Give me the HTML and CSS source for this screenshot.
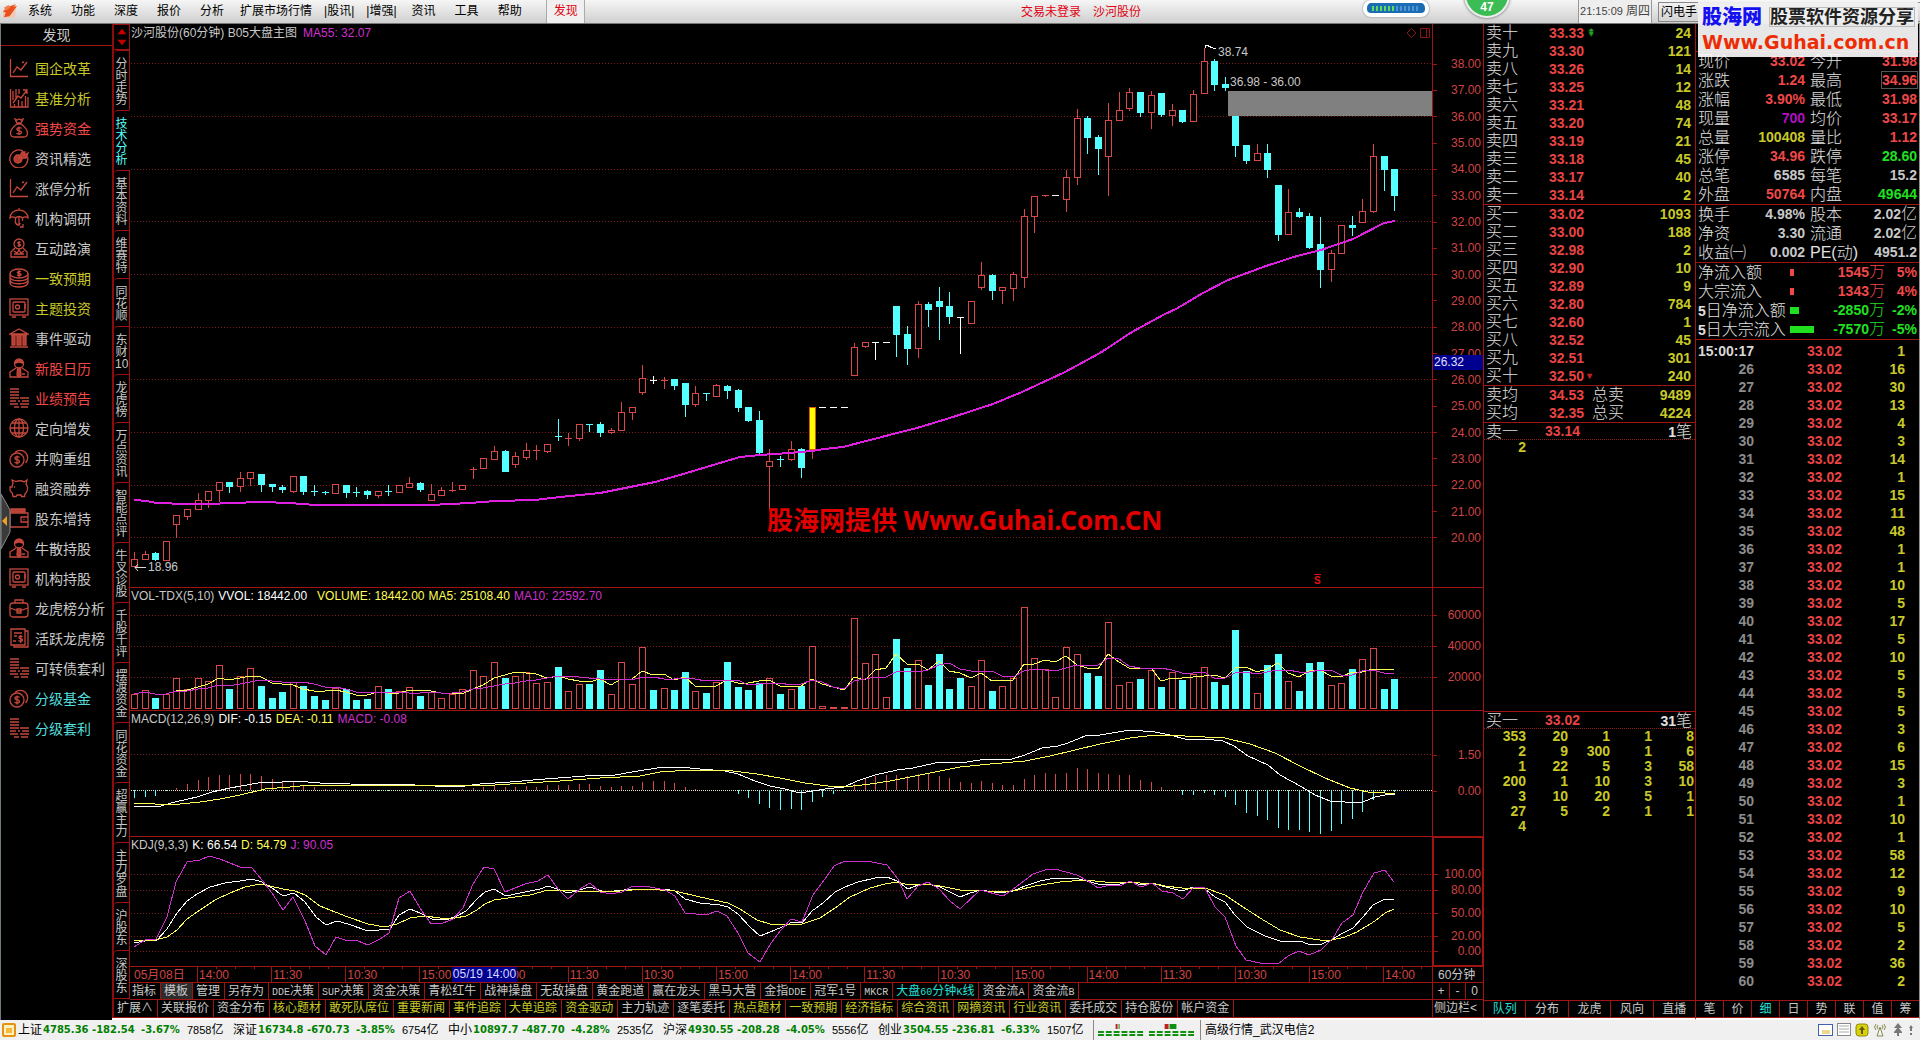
FILE: index.html
```html
<!DOCTYPE html>
<html lang="zh-CN">
<head>
<meta charset="utf-8">
<title>沙河股份 60分钟</title>
<link rel="stylesheet" href="styles.css">
</head>
<body>
<svg class="defs" width="0" height="0" aria-hidden="true">
  <defs>
    <symbol id="i-line" viewBox="0 0 20 20"><path d="M1.500 1v17.500H19M4 15l4-6 4 3 6-8M13 4.500l2-.5"/></symbol>
    <symbol id="i-bars" viewBox="0 0 20 20"><path d="M1.500 1v18H19V9M4 3v9M7 1v9M4 15l5-7 3 2 6-8M14 2h4v4M5.500 19v-3M9.500 19v-7M13 19v-6M16.500 19V8M10 1v5"/></symbol>
    <symbol id="i-bag" viewBox="0 0 20 20"><path d="M6 1l2 4h4l2-4-2 1-2-1-2 1zM8 6C4 9 1.500 12 1.500 15c0 3 2 4 4 4h9c2 0 4-1 4-4 0-3-2.500-6-6.500-9zM12.500 10.500c-1-1.500-5-1-4.500 1s5 1 4.500 3-4 2-5 .5M10 8.500v8.500"/></symbol>
    <symbol id="i-target" viewBox="0 0 20 20"><path d="M14 3A9 9 0 1 0 18.500 8.500"/><circle cx="9" cy="11" r="4" class="fill"/><path class="fill" d="M10 10l3-6 3 0-1 3 4-2-2 5z"/></symbol>
    <symbol id="i-umbrella" viewBox="0 0 20 20"><path d="M1 10a9 8 0 0 1 18 0c-2-1.500-4-1.500-5.500 0-2-2-5-2-7 0-2-1.500-4-1.500-5.500 0zM10 1v-1M10 9v8M6.500 10v3M13.500 10v3M14 16v3h-3M6 13c1 5 5 5 5 2"/></symbol>
    <symbol id="i-advisor" viewBox="0 0 20 20"><circle cx="10" cy="6" r="5"/><path d="M11.500 4.500c-1-1-3-.5-2.500.8s3 .7 2.500 2-2 1-3 .2M10 3v6M6 10l-4 4v5h16v-5l-4-4M5 13l3 2 2-3 2 3 3-2M5 16h10"/></symbol>
    <symbol id="i-coins" viewBox="0 0 20 20"><ellipse cx="10" cy="5.500" rx="9" ry="4.500"/><path d="M1 5.500v9c0 6 18 6 18 0v-9M1 9c0 5 18 5 18 0M1 12c0 5 18 5 18 0M12 4c-1-1-4-.5-3.500.7s4 .6 3.500 2-3 .8-4 0M10 2v7"/></symbol>
    <symbol id="i-safe" viewBox="0 0 20 20"><rect x="1" y="1" width="18" height="16"/><rect x="4" y="4" width="12" height="10" rx="1"/><circle cx="8.500" cy="9" r="2"/><path d="M16 6v5M3 19h4M13 19h4"/></symbol>
    <symbol id="i-bank" viewBox="0 0 20 20"><path d="M1 6l9-5 9 5zM1 19h18M2 7h16"/><path class="fill" d="M3 8h3v9H3zM8 8h4v9H8zM14 8h3v9h-3z"/></symbol>
    <symbol id="i-person" viewBox="0 0 20 20"><circle cx="10" cy="5.500" r="4.500"/><path class="fill" d="M6 5c1-4 7-4 8 0-2 0-3-1-4-1s-2 1-4 1zM8.500 11h3l.5 6-2 2-2-2z"/><path d="M7 10l-6 4v5h18v-5l-6-4M13 16h3"/></symbol>
    <symbol id="i-stack" viewBox="0 0 20 20"><path d="M1 1h9M1 4h9M1 7h9M1 10h9M1 13h6M1 16h8M11 10h9M13 13h7M9 13h2M11 16h9M5 19h5M12 19h7"/></symbol>
    <symbol id="i-globe" viewBox="0 0 20 20"><circle cx="10" cy="10" r="9"/><ellipse cx="10" cy="10" rx="4.500" ry="9"/><path d="M10 1v18M1 10h18M3 5h14M3 15h14"/></symbol>
    <symbol id="i-money" viewBox="0 0 20 20"><circle cx="8" cy="12" r="7"/><path d="M6 4.500A7 7 0 1 1 16.500 15M10.500 9.500c-1-1.500-5-1-4.500 1s5 1 4.500 3-4 2-5 .5M8 7.500v9"/></symbol>
    <symbol id="i-piggy" viewBox="0 0 20 20"><path d="M4 5l-1-3 4 1.500c3-1 6-1 8 .5l3-2-1 4c3 4 1 8-1 10l-.5 2.500h-3L12 17H8l-1 1.500H4L3.500 16C3 14 1 14 1 12V9h2zM5 9h1"/></symbol>
    <symbol id="i-wallet" viewBox="0 0 20 20"><path class="fill" d="M2 1h14v3H2z"/><path d="M1 5h18v14H1zM19 9h-7v5h7M14.500 11.500h1"/></symbol>
    <symbol id="i-case" viewBox="0 0 20 20"><rect x="1" y="5" width="18" height="14" rx="3"/><path d="M6 5V2h8v3M1 10l9 3 9-3M8 11h4v4H8z"/></symbol>
    <symbol id="i-bill" viewBox="0 0 20 20"><path d="M2 1h14v16H2zM16 3h3v16H5v-2M5 5h8M5 8h3M13.500 9c-1-1.500-4-1-3.500.7s4 .8 3.500 2.300-3 1.500-4 .5M11.800 7v8M4 13h3"/></symbol>
  </defs>
</svg>

<header class="menubar">
  <svg class="logo" viewBox="0 0 16 16" aria-hidden="true"><path d="M1 15V7l3-3 4 2 6-5 1 1-1 12z" fill="#f0c8b4"/><path d="M2 14l6-1 8-11-4 1 3-3-8 3-6 5 3 1z" fill="#e8501c"/><path d="M2 4l5-3 2 3-5 3z" fill="#f08050"/></svg>
  <nav class="menu">
    <button>系统</button><button>功能</button><button>深度</button><button>报价</button><button>分析</button><button class="wide">扩展市场行情</button><button class="piped">|股讯|</button><button class="piped">|增强|</button><button>资讯</button><button>工具</button><button>帮助</button><button class="discover">发现</button>
  </nav>
  <div class="account"><a href="#">交易未登录</a><a href="#">沙河股份</a></div>
  <div class="meter"><span class="meter-on"></span><span class="meter-off"></span></div>
  <div class="score">47</div>
  <div class="clock">21:15:09 <span>周四</span></div>
  <button class="flash">闪电手</button>
  <aside class="sitemark">
    <strong class="sitemark-name">股海网</strong><span class="sitemark-motto">股票软件资源分享</span>
    <strong class="sitemark-url">Www.Guhai.com.cn</strong>
  </aside>
</header>

<main class="workspace">
  <aside class="sidebar">
    <h2>发现</h2>
    <nav class="topics">
      <a href="#" class="yellow"><svg><use href="#i-line"/></svg>国企改革</a>
      <a href="#" class="yellow"><svg><use href="#i-bars"/></svg>基准分析</a>
      <a href="#" class="red"><svg><use href="#i-bag"/></svg>强势资金</a>
      <a href="#"><svg><use href="#i-target"/></svg>资讯精选</a>
      <a href="#"><svg><use href="#i-line"/></svg>涨停分析</a>
      <a href="#"><svg><use href="#i-umbrella"/></svg>机构调研</a>
      <a href="#"><svg><use href="#i-advisor"/></svg>互动路演</a>
      <a href="#" class="yellow"><svg><use href="#i-coins"/></svg>一致预期</a>
      <a href="#" class="yellow"><svg><use href="#i-safe"/></svg>主题投资</a>
      <a href="#"><svg><use href="#i-bank"/></svg>事件驱动</a>
      <a href="#" class="red"><svg><use href="#i-person"/></svg>新股日历</a>
      <a href="#" class="red"><svg><use href="#i-stack"/></svg>业绩预告</a>
      <a href="#"><svg><use href="#i-globe"/></svg>定向增发</a>
      <a href="#"><svg><use href="#i-money"/></svg>并购重组</a>
      <a href="#"><svg><use href="#i-piggy"/></svg>融资融券</a>
      <a href="#"><svg><use href="#i-wallet"/></svg>股东增持</a>
      <a href="#"><svg><use href="#i-person"/></svg>牛散持股</a>
      <a href="#"><svg><use href="#i-safe"/></svg>机构持股</a>
      <a href="#"><svg><use href="#i-case"/></svg>龙虎榜分析</a>
      <a href="#"><svg><use href="#i-bill"/></svg>活跃龙虎榜</a>
      <a href="#"><svg><use href="#i-stack"/></svg>可转债套利</a>
      <a href="#" class="cyan"><svg><use href="#i-money"/></svg>分级基金</a>
      <a href="#" class="cyan"><svg><use href="#i-stack"/></svg>分级套利</a>
    </nav>
    <button class="collapse" aria-label="收起"><svg viewBox="0 0 10 56"><path d="M0 0l9 16v22L0 55z" fill="#3a3a3a" stroke="#8a8a8a"/><path d="M1 27l5-5v10z" fill="#f0a020"/></svg></button>
  </aside>

  <section class="center">
    <div class="stage">
      <nav class="vtabs">
        <div class="arrows"><svg viewBox="0 0 15 26"><path d="M3 10l5-6 5 6zM3 16h10l-5 6z" fill="#c00000"/></svg></div>
        <a href="#">分时走势</a><a href="#" class="active">技术分析</a><a href="#">基本资料</a><a href="#">维赛特</a><a href="#">同花顺</a><a href="#">东财10</a><a href="#">龙虎榜</a><a href="#">万点资讯</a><a href="#">智能点评</a><a href="#">牛叉诊股</a><a href="#">千股千评</a><a href="#">摆渡资金</a><a href="#">同花资金</a><a href="#">超赢主力</a><a href="#">主力罗盘</a><a href="#">沪股东</a><a href="#">深股东</a>
      </nav>
      <div class="charts">
        <section class="panel price">
          <svg class="plot" id="price" viewBox="130 24 1302 563" preserveAspectRatio="none"></svg>
          <div class="legend"><span>沙河股份(60分钟) B05大盘主图</span><span class="magenta">MA55: 32.07</span></div>
          <svg class="corner" viewBox="0 0 24 12"><path d="M5.500 1.500l4.500 4.500-4.500 4.500L1 6zM14.500 1.500h9v9h-9zM20.500 1.500v9"/></svg>
          <span class="note high">38.74</span>
          <span class="note gap">36.98 - 36.00</span>
          <span class="note low"><svg viewBox="0 0 12 8"><path d="M12 4.500H1M4 1L1 4.500 4 8"/></svg>18.96</span>
          <span class="note sell">S</span>
          <strong class="banner">股海网提供 Www.Guhai.Com.CN</strong>
          <ol class="axis"><li>38.00</li><li>37.00</li><li>36.00</li><li>35.00</li><li>34.00</li><li>33.00</li><li>32.00</li><li>31.00</li><li>30.00</li><li>29.00</li><li>28.00</li><li>27.00</li><li>26.00</li><li>25.00</li><li>24.00</li><li>23.00</li><li>22.00</li><li>21.00</li><li>20.00</li></ol>
          <span class="cursor-price">26.32</span>
        </section>
        <section class="panel volume">
          <svg class="plot" id="volume" viewBox="130 588 1302 122" preserveAspectRatio="none"></svg>
          <div class="legend"><span>VOL-TDX(5,10)</span><span class="white">VVOL: 18442.00</span><span class="yellow-hi lead">VOLUME: 18442.00</span><span class="yellow-hi">MA5: 25108.40</span><span class="magenta">MA10: 22592.70</span></div>
          <ol class="axis"><li>60000</li><li>40000</li><li>20000</li></ol>
        </section>
        <section class="panel macd">
          <svg class="plot" id="macd" viewBox="130 711 1302 125" preserveAspectRatio="none"></svg>
          <div class="legend"><span>MACD(12,26,9)</span><span class="white">DIF: -0.15</span><span class="yellow-hi">DEA: -0.11</span><span class="magenta">MACD: -0.08</span></div>
          <ol class="axis"><li>1.50</li><li>0.00</li></ol>
        </section>
        <section class="panel kdj">
          <svg class="plot" id="kdj" viewBox="130 837 1302 129" preserveAspectRatio="none"></svg>
          <div class="legend"><span>KDJ(9,3,3)</span><span class="white">K: 66.54</span><span class="yellow-hi">D: 54.79</span><span class="magenta">J: 90.05</span></div>
          <ol class="axis"><li>100.00</li><li>80.00</li><li>50.00</li><li>20.00</li><li>0.00</li></ol>
        </section>
        <div class="timeline">
          <ol><li>05月08日</li><li>14:00</li><li>11:30</li><li>10:30</li><li>15:00</li><li>14:00</li><li>11:30</li><li>10:30</li><li>15:00</li><li>14:00</li><li>11:30</li><li>10:30</li><li>15:00</li><li>14:00</li><li>11:30</li><li>10:30</li><li>15:00</li><li>14:00</li></ol>
          <span class="cursor-time">05/19 14:00</span>
          <span class="period">60分钟</span>
        </div>
        <div class="strip templates">
          <nav><button>指标</button><button class="on">模板</button><button>管理</button><button>另存为</button><button><code>DDE</code>决策</button><button><code>SUP</code>决策</button><button>资金决策</button><button>青松红牛</button><button>战神操盘</button><button>无敌操盘</button><button>黄金跑道</button><button>赢在龙头</button><button>黑马大营</button><button>金指<code>DDE</code></button><button>冠军<code>1</code>号</button><button><code>MKCR</code></button><button class="cyan-hi">大盘<code>60</code>分钟<code>K</code>线</button><button>资金流<code>A</code></button><button>资金流<code>B</code></button></nav>
          <div class="zoomers"><button>+</button><button>-</button><button>0</button></div>
        </div>
      </div>
    </div>
    <div class="strip extras">
      <nav><button>扩展∧</button><button>关联报价</button><button>资金分布</button><button class="yellow">核心题材</button><button class="yellow">敢死队席位</button><button class="yellow">重要新闻</button><button class="yellow">事件追踪</button><button class="yellow">大单追踪</button><button class="yellow">资金驱动</button><button>主力轨迹</button><button>逐笔委托</button><button class="yellow">热点题材</button><button class="yellow">一致预期</button><button class="yellow">经济指标</button><button class="yellow">综合资讯</button><button class="yellow">网摘资讯</button><button class="yellow">行业资讯</button><button>委托成交</button><button>持仓股份</button><button>帐户资金</button></nav>
      <button class="side-toggle">侧边栏&lt;</button>
    </div>
  </section>

  <section class="depth">
    <table class="book">
      <tbody>
        <tr><th>卖十</th><td class="p">33.33</td><td class="mark up">⇞</td><td class="q">24</td></tr>
        <tr><th>卖九</th><td class="p">33.30</td><td></td><td class="q">121</td></tr>
        <tr><th>卖八</th><td class="p">33.26</td><td></td><td class="q">14</td></tr>
        <tr><th>卖七</th><td class="p">33.25</td><td></td><td class="q">12</td></tr>
        <tr><th>卖六</th><td class="p">33.21</td><td></td><td class="q">48</td></tr>
        <tr><th>卖五</th><td class="p">33.20</td><td></td><td class="q">74</td></tr>
        <tr><th>卖四</th><td class="p">33.19</td><td></td><td class="q">21</td></tr>
        <tr><th>卖三</th><td class="p">33.18</td><td></td><td class="q">45</td></tr>
        <tr><th>卖二</th><td class="p">33.17</td><td></td><td class="q">40</td></tr>
        <tr><th>卖一</th><td class="p">33.14</td><td></td><td class="q">2</td></tr>
      </tbody>
    </table>
    <table class="book">
      <tbody>
        <tr><th>买一</th><td class="p">33.02</td><td></td><td class="q">1093</td></tr>
        <tr><th>买二</th><td class="p">33.00</td><td></td><td class="q">188</td></tr>
        <tr><th>买三</th><td class="p">32.98</td><td></td><td class="q">2</td></tr>
        <tr><th>买四</th><td class="p">32.90</td><td></td><td class="q">10</td></tr>
        <tr><th>买五</th><td class="p">32.89</td><td></td><td class="q">9</td></tr>
        <tr><th>买六</th><td class="p">32.80</td><td></td><td class="q">784</td></tr>
        <tr><th>买七</th><td class="p">32.60</td><td></td><td class="q">1</td></tr>
        <tr><th>买八</th><td class="p">32.52</td><td></td><td class="q">45</td></tr>
        <tr><th>买九</th><td class="p">32.51</td><td></td><td class="q">301</td></tr>
        <tr><th>买十</th><td class="p">32.50</td><td class="mark down">▾</td><td class="q">240</td></tr>
      </tbody>
    </table>
    <table class="book averages">
      <tbody>
        <tr><th>卖均</th><td class="p">34.53</td><th>总卖</th><td class="q">9489</td></tr>
        <tr><th>买均</th><td class="p">32.35</td><th>总买</th><td class="q">4224</td></tr>
      </tbody>
    </table>
    <section class="queue">
      <h3><span>卖一</span><b class="up-price">33.14</b><span class="count"><b>1</b>笔</span></h3>
      <table><tbody><tr><td>2</td><td></td><td></td><td></td><td></td></tr></tbody></table>
    </section>
    <section class="queue">
      <h3><span>买一</span><b class="up-price">33.02</b><span class="count"><b>31</b>笔</span></h3>
      <table><tbody>
        <tr><td>353</td><td>20</td><td>1</td><td>1</td><td>8</td></tr>
        <tr><td>2</td><td>9</td><td>300</td><td>1</td><td>6</td></tr>
        <tr><td>1</td><td>22</td><td>5</td><td>3</td><td>58</td></tr>
        <tr><td>200</td><td>1</td><td>10</td><td>3</td><td>10</td></tr>
        <tr><td>3</td><td>10</td><td>20</td><td>5</td><td>1</td></tr>
        <tr><td>27</td><td>5</td><td>2</td><td>1</td><td>1</td></tr>
        <tr><td>4</td><td></td><td></td><td></td><td></td></tr>
      </tbody></table>
    </section>
    <nav class="foot-tabs"><button class="cyan-hi">队列</button><button>分布</button><button>龙虎</button><button>风向</button><button>直播</button></nav>
  </section>

  <section class="quote">
    <div class="quote-head"></div>
    <table class="stats">
      <tbody>
        <tr><th>现价</th><td class="r">33.02</td><th>今开</th><td class="r">31.98</td></tr>
        <tr><th>涨跌</th><td class="r">1.24</td><th>最高</th><td class="r"><span class="boxed">34.96</span></td></tr>
        <tr><th>涨幅</th><td class="r">3.90%</td><th>最低</th><td class="r">31.98</td></tr>
        <tr><th>现量</th><td class="m">700</td><th>均价</th><td class="r">33.17</td></tr>
        <tr><th>总量</th><td class="y">100408</td><th>量比</th><td class="r">1.12</td></tr>
        <tr><th>涨停</th><td class="r">34.96</td><th>跌停</th><td class="g">28.60</td></tr>
        <tr><th>总笔</th><td>6585</td><th>每笔</th><td>15.2</td></tr>
        <tr><th>外盘</th><td class="r">50764</td><th>内盘</th><td class="g">49644</td></tr>
      </tbody>
    </table>
    <table class="stats">
      <tbody>
        <tr><th>换手</th><td>4.98%</td><th>股本</th><td>2.02<i>亿</i></td></tr>
        <tr><th>净资</th><td>3.30</td><th>流通</th><td>2.02<i>亿</i></td></tr>
        <tr><th>收益㈠</th><td>0.002</td><th>PE(动)</th><td>4951.2</td></tr>
      </tbody>
    </table>
    <table class="flows">
      <tbody>
        <tr class="r"><th>净流入额</th><td class="bar"><span style="width:4px"></span></td><td>1545<i>万</i></td><td>5%</td></tr>
        <tr class="r"><th>大宗流入</th><td class="bar"><span style="width:4px"></span></td><td>1343<i>万</i></td><td>4%</td></tr>
        <tr class="g"><th><b>5</b>日净流入额</th><td class="bar"><span style="width:9px"></span></td><td>-2850<i>万</i></td><td>-2%</td></tr>
        <tr class="g"><th><b>5</b>日大宗流入</th><td class="bar"><span style="width:24px"></span></td><td>-7570<i>万</i></td><td>-5%</td></tr>
      </tbody>
    </table>
    <div class="ticks"><table><tbody id="ticks"></tbody></table></div>
    <nav class="foot-tabs"><button>笔</button><button>价</button><button class="cyan-hi">细</button><button>日</button><button>势</button><button>联</button><button>值</button><button>筹</button></nav>
  </section>
</main>

<footer class="statusbar">
  <svg class="status-logo" viewBox="0 0 14 14"><rect x="1" y="1" width="12" height="12" rx="1" fill="#fff0c0" stroke="#e89010" stroke-width="2"/><rect x="4" y="5" width="6" height="5" fill="#f8b840"/></svg>
  <ul class="indices">
    <li><span>上证</span><b>4785.36</b><b>-182.54</b><b>-3.67%</b><span><small>7858</small>亿</span></li>
    <li><span>深证</span><b>16734.8</b><b>-670.73</b><b>-3.85%</b><span><small>6754</small>亿</span></li>
    <li><span>中小</span><b>10897.7</b><b>-487.70</b><b>-4.28%</b><span><small>2535</small>亿</span></li>
    <li><span>沪深</span><b>4930.55</b><b>-208.28</b><b>-4.05%</b><span><small>5556</small>亿</span></li>
    <li><span>创业</span><b>3504.55</b><b>-236.81</b><b>-6.33%</b><span><small>1507</small>亿</span></li>
  </ul>
  <svg class="heat" viewBox="0 0 100 14"><path d="M0 9h46M0 12h46M52 9h48M52 12h48" stroke="#109010" stroke-width="2" stroke-dasharray="6 2"/><path d="M18 1h2v5h-2zM68 1h4v5h-4z" fill="#c02020"/><path d="M21 1h1v5h-1zM73 1h7v5h-7z" fill="#109010"/></svg>
  <span class="server">高级行情_武汉电信2</span>
  <svg class="tray" viewBox="0 0 98 16"><rect x="1.500" y="2.500" width="14" height="11" fill="#fff" stroke="#4060b0"/><path d="M5 9h8M5 11h8" stroke="#d8b020"/><rect x="20.500" y="1.500" width="13" height="12" fill="#fff" stroke="#888"/><path d="M22 4h10M22 7h10M22 10h10" stroke="#aaa"/><rect x="39" y="2" width="12" height="12" rx="3" fill="#d8d010" stroke="#908c00"/><path d="M42 8l3-4 3 4h-2v4h-2V8z" fill="#605c00"/><path d="M63 5l-3 9h6zM59 2q-3 3 0 6M67 2q3 3 0 6M61 3q-2 2 0 4M65 3q2 2 0 4" fill="none" stroke="#8a8a50"/><path d="M81 1l4 5h-8zM81 5l4 5h-8zM77 10h8v1h-3v3h-2v-3h-3zM94 3l2 3h-1v3h-2V6h-1zM93 11h2v2h-2z" fill="#777"/></svg>
</footer>
<script src="app.js"></script>
</body>
</html>
```
FILE: styles.css
```css
* { box-sizing: border-box; }
html, body { height: 100%; }
body {
  margin: 0;
  display: flex;
  flex-direction: column;
  background: #000;
  color: #c8c8c8;
  font: 12px/16px "Liberation Sans", "Noto Sans CJK SC", sans-serif;
  overflow: hidden;
}
button { margin: 0; padding: 0; border: 0; background: none; color: inherit; font: inherit; white-space: nowrap; }
a { color: inherit; text-decoration: none; }
ol, ul, h2, h3 { margin: 0; padding: 0; list-style: none; font-weight: 400; }
table { width: 100%; border-collapse: collapse; table-layout: fixed; }
th, td { padding: 0; white-space: nowrap; }
i { font-style: normal; }
b { font-weight: 700; }
.defs { position: absolute; }

.yellow { color: #c8c828; }
.yellow-hi { color: #ffff54; }
.white { color: #fff; }
.magenta { color: #d030d0; }
.cyan { color: #54dcdc; }
.cyan-hi { color: #20e0d8; }
.red { color: #f04848; }

/* menu bar */
.menubar {
  position: relative;
  flex: none;
  display: flex;
  align-items: center;
  height: 24px;
  background: linear-gradient(#f6f6f6, #cfcfcf);
  border-bottom: 1px solid #777;
  color: #000;
}
.logo { width: 15px; height: 15px; margin: 0 2px; }
.menu { display: flex; }
.menu button { padding: 0 10px 0 9px; line-height: 23px; }
.menu .wide { padding: 0 6px; }
.menu .piped { padding: 0 6px; }
.menu .discover { margin-left: 14px; padding: 0 6px 0 7px; border: solid #aaa; border-width: 0 1px; background: #f0f0f0; color: #e00010; }
.account { display: flex; gap: 12px; margin-left: auto; color: #e00010; }
.meter { display: flex; align-items: center; align-self: flex-start; width: 66px; height: 17px; margin-left: 222px; padding: 0 5px; border: 4px solid #fff; border-top-width: 3px; border-radius: 8px; background: #1c6cb4; box-shadow: 0 0 2px #777; }
.meter-on, .meter-off { height: 5px; flex: 1; background: repeating-linear-gradient(90deg, #5ce05c 0 2px, #1c6cb4 2px 4px); }
.meter-off { background: repeating-linear-gradient(90deg, #4c94d4 0 2px, #1c6cb4 2px 4px); }
.score { align-self: flex-start; width: 46px; height: 46px; margin: -28px 0 0 35px; padding-top: 25px; border: 2px solid #eee; border-radius: 50%; background: #3cbc54; box-shadow: 0 0 3px #555; color: #fff; font-size: 12px; font-weight: 700; line-height: 16px; text-align: center; z-index: 1; }
.clock { width: 74px; margin-left: 68px; border: solid #999; border-width: 0 1px; background: #eee; color: #444; font-size: 11px; line-height: 23px; text-align: center; white-space: nowrap; }
.clock span { font-size: 12px; }
.flash { flex: none; width: 268px; margin: 0 -6px 0 6px; padding-left: 2px; border: 1px solid #888; line-height: 18px; text-align: left; }
.sitemark { position: absolute; top: 2px; right: 2px; z-index: 2; display: grid; grid-template-columns: 64px 1fr; align-content: center; align-items: center; width: 220px; height: 55px; padding: 0 4px; background: linear-gradient(rgba(240, 240, 240, .96) 50%, rgba(255, 255, 255, .9)); white-space: nowrap; }
.sitemark-name { color: #1410f0; font-size: 20px; font-weight: 900; line-height: 24px; }
.sitemark-motto { margin-left: 4px; color: #222; font-size: 18px; font-weight: 700; line-height: 18px; outline: 1px solid #bbb; width: 144px; }
.sitemark-url { grid-column: 1 / 3; color: #ee2c04; font: 700 19px/26px "DejaVu Sans", sans-serif; }

/* workspace */
.workspace { flex: 1; min-height: 0; display: grid; grid-template: minmax(0, 1fr) / 112px minmax(0, 1fr) 212px 224px; }
.sidebar { position: relative; border-left: 1px solid #707880; }
.sidebar h2 { height: 22px; border-bottom: 1px solid #a01414; font-size: 14px; line-height: 22px; text-align: center; }
.topics { padding-top: 8px; font-size: 14px; line-height: 30px; }
.topics a { display: flex; align-items: center; gap: 6px; height: 30px; padding-left: 8px; }
.topics svg { width: 20px; height: 20px; margin-bottom: 2px; fill: none; stroke: #c4483c; stroke-width: 1.3; }
.fill { fill: #b43c30; }
.collapse { position: absolute; left: 0; top: 470px; width: 10px; height: 56px; }
.collapse svg { display: block; width: 10px; height: 56px; }

.center, .depth, .quote { display: flex; flex-direction: column; min-width: 0; border-bottom: 2px solid #fff; }
.stage { flex: 1; min-height: 0; display: grid; grid-template: minmax(0, 1fr) / 18px minmax(0, 1fr); }
.vtabs { overflow: hidden; border-left: 2px solid #8c0c0c; }
.arrows { height: 26px; border: 1px solid #a01010; border-left: 0; }
.arrows svg { display: block; width: 15px; height: 24px; }
.vtabs a { display: block; padding: 7px 1px 4px; border: 1px solid #a01010; border-width: 1px 1px 0 0; border-top-left-radius: 4px; line-height: 12px; text-align: center; }
.vtabs a:last-child { border-bottom-width: 1px; }
.vtabs .active { border-right-color: transparent; color: #54ffff; }

.charts { display: flex; flex-direction: column; min-width: 0; }
.panel { position: relative; flex: none; display: grid; grid-template: minmax(0, 1fr) / minmax(0, 1fr) 52px; border-bottom: 1px solid #a01414; }
.price { flex: 1; min-height: 0; }
.volume { height: 123px; }
.macd { height: 126px; }
.kdj { height: 130px; }
.plot { grid-area: 1 / 1; display: block; width: 100%; height: 100%; shape-rendering: crispEdges; }
.legend { grid-area: 1 / 1; align-self: start; display: flex; gap: 4px; padding-left: 1px; white-space: nowrap; }
.price .legend { gap: 6px; line-height: 18px; }
.legend .lead { margin-left: 6px; }
.axis { grid-area: 1 / 2; border: solid #a01414; border-width: 0 1px; color: #d04444; text-align: right; display: grid; align-content: start; }
.axis li { padding-right: 2px; background: linear-gradient(#a01414, #a01414) 0 50% / 4px 1px no-repeat; }
.price .axis { padding: 27px 0 36px; grid-auto-rows: 1fr; align-items: stretch; align-content: stretch; }
.price .axis li { display: flex; align-items: center; justify-content: flex-end; }
.volume .axis { padding-top: 12px; line-height: 31px; }
.macd .axis { padding-top: 26px; line-height: 36px; }
.kdj .axis { margin: -1px 0 -1px; padding-top: 29px; border-width: 2px; line-height: 14px; }
.kdj .axis li { padding-right: 1px; }
.kdj .axis li:nth-child(2) { margin-top: 2px; }
.kdj .axis li:nth-child(3), .kdj .axis li:nth-child(4) { margin-top: 9px; }
.kdj .axis li:nth-child(5) { margin-top: 1px; }
.corner { position: absolute; top: 3px; right: 54px; width: 24px; height: 12px; fill: none; stroke: #8c1414; }
.cursor-price { position: absolute; top: 331px; right: 1px; width: 50px; padding-left: 1px; background: #000090; color: #e0e0ff; line-height: 15px; }
.note { position: absolute; color: #c8c8c8; white-space: nowrap; }
.note.high { left: 1088px; top: 20px; }
.note.gap { left: 1100px; top: 50px; }
.note.low { left: 4px; top: 535px; }
.note.low svg { width: 12px; height: 8px; margin-right: 2px; fill: none; stroke: #d8d8d8; }
.note.sell { left: 1184px; top: 550px; color: #e01010; font-size: 10px; font-weight: 700; line-height: 12px; border-top: 1px solid #e01010; }
.banner { position: absolute; left: 637px; top: 478px; color: #e00000; font: 700 26px/36px "Noto Sans", "Noto Sans CJK SC", sans-serif; white-space: nowrap; }

.timeline { position: relative; flex: none; display: grid; grid-template-columns: minmax(0, 1fr) 52px; height: 16px; border-bottom: 1px solid #a01414; line-height: 16px; }
.timeline ol { display: flex; color: #d04444; overflow: hidden; }
.timeline li { flex: 1; height: 16px; padding-left: 1px; border-left: 1px solid #a01414; background: repeating-linear-gradient(90deg, transparent 0 18px, #a01414 18px 19px) 0 0 / 100% 2px no-repeat; white-space: nowrap; }
.timeline li:first-child { flex: 0 0 67px; padding-left: 4px; border: 0; background: none; }
.timeline li:last-child { flex: 0 0 49px; }
.cursor-time { position: absolute; left: 322px; top: 0; width: 65px; height: 15px; background: #000090; color: #d8d8ff; line-height: 15px; text-align: center; white-space: nowrap; }
.period { border: solid #a01414; border-width: 0 1px; padding-left: 5px; }

.strip { flex: none; display: grid; grid-template-columns: minmax(0, 1fr) 52px; border-bottom: 1px solid #a01414; line-height: 16px; }
.templates { height: 17px; }
.extras { height: 18px; line-height: 17px; }
.strip nav { display: flex; overflow: hidden; }
.strip nav button { padding: 0 4px 0 3px; border-right: 1px solid #a01414; }
.strip nav button:first-child { padding-left: 2px; }
.extras nav { border-left: 2px solid #8c0c0c; }
.extras nav button:first-child { padding-left: 3px; }
.strip .on { background: #2c2c2c; }
.strip code { font: 10px/16px "Liberation Mono", monospace; }
.zoomers { display: grid; grid-template-columns: 16px 16px 1fr; border: solid #a01414; border-width: 0 1px; }
.zoomers button + button { border-left: 1px solid #a01414; }
.side-toggle { border: solid #a01414; border-width: 0 1px; padding-left: 1px; text-align: left; }

/* order book */
.depth { border-right: 1px solid #a01414; }
.book { border-bottom: 1px solid #a01414; font-size: 16px; }
.book tr { height: 18px; }
.book th, .book td { height: 18px; line-height: 18px; }
.book th { width: 34px; padding-left: 2px; color: #e0e0e0; font-weight: 300; text-align: left; }
.book td { width: auto; font-size: 14px; font-weight: 700; text-align: right; }
.book .p { width: 66px; color: #e84444; }
.book .mark { width: 12px; font-size: 10px; text-align: left; padding-left: 3px; }
.book .up { color: #20a020; }
.book .down { color: #c02020; }
.book .q { padding-right: 4px; color: #c8c828; }
.averages .p + th { width: 44px; padding-left: 8px; }
.queue { flex: 1; min-height: 0; border-bottom: 1px solid #a01414; }
.queue:last-of-type { border-bottom: 0; }
.queue h3 { display: flex; height: 17px; padding: 0 3px 0 2px; border-bottom: 1px dotted #8c1c1c; color: #e0e0e0; font-size: 16px; font-weight: 300; line-height: 17px; }
.queue h3 b { font-size: 14px; font-weight: 700; }
.queue .up-price { width: 62px; color: #e84444; text-align: right; }
.count { margin-left: auto; }
.queue table { width: 210px; color: #c8c828; font-size: 14px; font-weight: 700; line-height: 15px; text-align: right; }
.foot-tabs { flex: none; display: flex; height: 18px; border: solid #a01414; border-width: 1px 0; }
.foot-tabs button { flex: 1; line-height: 16px; }
.foot-tabs button + button { border-left: 1px solid #a01414; }

/* quote */
.quote { border-right: 1px solid #909090; }
.quote-head { flex: none; height: 28px; border-bottom: 1px solid #a01414; }
.stats, .flows { border-bottom: 1px solid #a01414; font-size: 16px; }
.stats th, .stats td, .flows th, .flows td { height: 19px; line-height: 19px; }
.stats th, .flows th { color: #e0e0e0; font-weight: 300; text-align: left; padding-left: 2px; }
.stats td, .flows td { font-size: 14px; font-weight: 700; text-align: right; }
.stats th { width: 34px; }
.stats td { width: 75px; }
.stats td + th { width: 38px; padding-left: 5px; }
.stats td:last-child, .flows td:last-child { width: auto; padding-right: 2px; }
.stats i, .flows i { font-size: 16px; font-weight: 300; line-height: 1px; }
.boxed { outline: 1px solid #555; }
.r { color: #f04848; }
.g { color: #20e020; }
.m { color: #b010c0; }
.y { color: #c8c828; }
.flows th { width: 94px; }
.flows th b { font-size: 14px; font-weight: 700; line-height: 1px; }
.flows .bar { width: 25px; }
.flows .bar span { display: block; height: 7px; background: currentColor; }
.flows td:nth-child(3) { width: 70px; }
.ticks { flex: 1; min-height: 0; overflow: hidden; padding-top: 2px; }
.ticks td { height: 18px; font-size: 14px; font-weight: 700; line-height: 18px; text-align: right; }
.ticks td:nth-child(1) { width: 58px; color: #8c8c8c; }
.ticks tr:first-child td:first-child { color: #d8d8d8; }
.ticks td:nth-child(2) { width: 88px; color: #e84444; }
.ticks td:nth-child(3) { color: #c8c828; padding-right: 14px; }

/* status bar */
.statusbar { flex: none; display: flex; align-items: center; height: 20px; background: #f0f0f0; color: #000; white-space: nowrap; }
.status-logo { width: 14px; height: 14px; margin: 0 2px; }
.indices { display: flex; }
.indices li { display: grid; grid-template-columns: 25px 49px 49px 46px auto; align-items: center; width: 215px; }
.indices b { color: #008000; font: 700 10px/20px "DejaVu Sans", sans-serif; }
.indices small { font-size: 11px; }
.heat { width: 108px; height: 20px; padding: 2px 4px; border: solid #888; border-width: 0 1px; }
.server { padding-left: 4px; }
.tray { width: 98px; height: 16px; margin-left: auto; margin-right: 5px; }

/* chart marks */
.grid { stroke: #7c1c1c; stroke-dasharray: 1 2; }
.zero { stroke: #e8e8c8; stroke-dasharray: 1 1; }
.up-bar { fill: #000; stroke: #d84848; }
.up-wick { stroke: #d84848; }
.down-bar { fill: #54ffff; }
.down-wick { stroke: #54ffff; }
.flat-wick { stroke: #fff; }
.limit-bar { fill: #ffff00; stroke: #d86000; }
.gap-zone { fill: #808080; }
.curve { fill: none; stroke-width: 1; }
.curve.thick { stroke: #e020e0; stroke-width: 2; }
.c-white { stroke: #fff; }
.c-yellow { stroke: #ffff54; }
.c-magenta { stroke: #d030d0; }
```
FILE: app.js
```js
const NS = 'http://www.w3.org/2000/svg';
const FIRST = 134, STEP = 10.59;
const cx = i => Math.round(FIRST + STEP * i);

function add(id, tag, attrs) {
  const el = document.createElementNS(NS, tag);
  for (const k in attrs) el.setAttribute(k, attrs[k]);
  document.getElementById(id).appendChild(el);
}
const hline = (id, y, cls) => add(id, 'line', { x1: 131, x2: 1432, y1: y + .5, y2: y + .5, class: cls });
const vline = (id, x, y1, y2, cls) => add(id, 'line', { x1: x + .5, x2: x + .5, y1, y2, class: cls });
const curve = (id, points, cls) => add(id, 'polyline', { points, class: 'curve ' + cls });

/* kind high top bottom low; r rising, c falling, x/X/w crosses, y limit-up */
const candles = `r 552 559 566 566,r 551 554 559 559,c 552 553 559 560,r 541 541 560 560,r 515 515 524 537,r 509 509 516 519,r 493 500 509 509,r 491 491 500 507,r 482 482 490 501,c 482 482 486 492,
r 472 478 486 491,r 472 472 478 485,c 474 474 484 491,c 484 484 486 491,c 485 487 489 492,r 476 476 491 492,c 476 476 491 494,x 485 491 491 495,x 491 492 492 494,r 484 484 493 493,
c 485 485 492 497,x 487 492 492 496,c 490 491 494 498,r 491 491 495 497,x 485 491 491 495,r 485 485 492 492,r 477 483 487 487,c 482 483 489 491,r 484 494 500 500,r 487 490 495 495,
X 482 490 490 491,r 485 485 489 489,X 467 469 469 478,r 458 458 468 468,r 446 451 459 459,c 450 451 471 471,r 452 456 464 467,r 443 450 457 459,X 445 450 450 459,r 444 444 451 452,
x 419 436 436 440,X 433 438 438 445,r 424 424 438 440,x 424 424 424 431,c 422 424 432 436,r 428 430 432 433,r 402 412 430 430,r 407 407 412 419,r 365 378 392 394,w 376 380 380 383,
X 377 380 380 388,c 379 379 385 389,c 383 383 404 416,r 386 393 404 406,x 393 393 393 400,r 384 385 396 396,c 385 386 390 398,c 389 390 407 411,c 407 407 420 421,c 411 420 452 453,
r 449 461 466 510,x 456 459 459 466,r 441 449 459 460,c 448 449 467 477,y 407 407 449 458,w 407 407 407 407,w 407 407 407 407,w 407 407 407 407,r 343 347 375 375,r 342 342 346 347,
w 342 342 342 359,w 342 342 342 342,c 306 306 334 356,c 326 334 348 364,r 301 304 348 357,c 302 304 309 326,c 287 301 306 339,c 292 306 316 323,w 317 317 317 353,r 301 301 323 323,
r 262 275 287 289,c 274 275 290 299,r 287 287 290 303,r 272 274 288 300,r 209 216 277 287,r 196 196 216 232,X 195 195 195 196,w 195 195 195 195,r 170 177 199 211,r 109 118 177 184,
c 116 118 137 153,c 135 137 148 174,r 103 120 156 195,r 92 110 120 120,r 88 92 108 110,c 92 92 112 116,r 91 95 112 128,c 93 93 114 116,r 104 110 115 125,c 110 110 121 122,
r 90 94 121 121,r 48 61 93 93,c 59 61 84 90,c 77 84 87 90,c 116 116 145 156,c 145 145 160 163,r 144 153 160 160,c 144 153 169 177,c 185 185 234 240,r 189 212 234 234,
c 208 212 216 217,c 213 216 247 248,c 217 244 269 287,r 250 253 269 281,r 225 225 253 253,c 216 225 227 235,r 199 211 222 222,r 144 156 211 212,c 156 156 169 190,c 169 169 195 210`
  .split(',').map(s => { const [k, ...v] = s.trim().split(' '); return [k, ...v.map(Number)]; });

[63, 116, 169, 221, 274, 327, 379, 432, 485, 537].forEach(y => hline('price', y, 'grid'));
add('price', 'rect', { x: 1228, y: 91, width: 204, height: 25, class: 'gap-zone' });

candles.forEach(([kind, high, top, bottom, low], i) => {
  const x = cx(i);
  const wick = { r: 'up', X: 'up', y: 'up', c: 'down', x: 'down', w: 'flat' }[kind] + '-wick';
  if (low > high) vline('price', x, high, low + 1, wick);
  if (kind === 'r') add('price', 'rect', { x: x - 2.5, y: top + .5, width: 6, height: Math.max(bottom - top, 2), class: 'up-bar' });
  else if (kind === 'c') add('price', 'rect', { x: x - 3, y: top, width: 7, height: bottom - top + 1, class: 'down-bar' });
  else if (kind === 'y') add('price', 'rect', { x: x - 2.5, y: top + .5, width: 6, height: bottom - top, class: 'limit-bar' });
  else add('price', 'line', { x1: x - 3, x2: x + 4, y1: top + .5, y2: top + .5, class: wick });
});
curve('price', '134,500 147,501 156,503 167,503 177,504 210,504 230,503 262,502 290,503 315,505 430,505 470,503 495,501 535,500 560,497 600,493 620,489 655,482 680,475 710,466 740,457 760,455 790,453 812,451 824,449 843,447 870,440 905,431 917,428 953,417 993,404 1022,392 1065,372 1100,353 1132,332 1163,315 1176,309 1203,293 1228,280 1266,266 1297,256 1321,250 1353,239 1384,223 1395,221', 'thick');
curve('price', '1205,48 1205,45 1209,45', 'c-white');
curve('price', '1205,45 1216,49', 'c-white');

/* volume bar tops */
const volumes = [694,690,698,694,678,689,678,681,665,689,676,668,686,698,692,682,686,696,700,688,689,700,699,686,689,691,687,696,692,698,694,689,670,676,662,678,676,672,683,682,667,691,684,684,670,694,662,684,647,690,688,690,672,691,693,682,662,687,690,683,678,694,689,686,646,706,707,707,618,663,654,697,639,668,660,685,654,689,678,686,660,691,686,678,607,658,669,697,647,654,673,676,622,685,682,679,670,687,672,680,674,667,682,685,630,671,693,665,654,681,691,663,662,685,683,669,659,648,689,679];
const fallingFlat = new Set([49, 78]);
[615, 646, 677].forEach(y => hline('volume', y, 'grid'));
volumes.forEach((top, i) => {
  const x = cx(i), kind = candles[i][0];
  if (kind === 'c' || kind === 'x' || fallingFlat.has(i)) add('volume', 'rect', { x: x - 3, y: top, width: 7, height: 709 - top, class: 'down-bar' });
  else add('volume', 'rect', { x: x - 2.5, y: top + .5, width: 6, height: 708 - top, class: 'up-bar' });
});
const average = n => volumes.map((v, i) => {
  const part = volumes.slice(Math.max(0, i - n + 1), i + 1);
  return cx(i) + ',' + Math.round(part.reduce((a, b) => a + b, 0) / part.length);
}).join(' ');
curve('volume', average(5), 'c-yellow');
curve('volume', average(10), 'c-magenta');

/* MACD histogram ends */
const macd = [798,797,796,791,788,784,780,777,775,775,774,774,776,779,782,782,785,787,789,789,790,790,790,791,791,790,790,791,791,791,790,789,788,787,786,787,787,786,787,785,785,785,784,784,786,787,786,786,782,781,781,783,787,789,790,790,790,794,798,804,808,810,809,810,802,797,794,791,784,778,776,775,775,776,774,774,776,778,782,783,781,783,785,785,779,775,773,774,773,768,769,773,774,775,775,780,782,787,790,795,795,793,795,797,805,813,816,820,828,830,830,832,834,831,824,819,812,800,792,792];
hline('macd', 754, 'grid');
hline('macd', 790, 'zero');
macd.forEach((y, i) => { if (y !== 790) vline('macd', cx(i), Math.min(y, 790), Math.max(y, 790), y < 790 ? 'up-wick' : 'down-wick'); });
curve('macd', '134,807 148,806 157,807 175,802 197,797 212,792 230,788 258,783 282,782 295,781 320,783 350,784 415,785 435,786 465,786 480,784 510,782 545,779 585,776 615,775 638,771 657,768 680,767 700,769 725,771 738,774 755,781 770,786 785,789 800,793 813,791 825,789 844,787 857,781 875,775 897,770 913,768 935,763 950,762 960,763 980,760 1012,759 1025,755 1042,748 1058,746 1068,743 1085,736 1100,735 1130,730 1155,732 1170,735 1185,739 1205,739 1223,741 1234,746 1248,756 1268,765 1280,775 1302,787 1315,795 1330,801 1345,802 1363,802 1375,797 1385,795 1395,794', 'c-white');
curve('macd', '134,803 155,804 180,804 200,802 220,799 240,795 265,789 290,787 310,785 345,785 415,785 480,786 510,784 560,781 600,778 640,776 660,772 690,770 725,770 757,774 780,778 805,783 828,786 845,787 870,784 890,781 915,776 940,771 960,767 990,764 1025,761 1050,756 1075,750 1100,744 1130,738 1155,735 1185,736 1205,737 1225,738 1250,744 1275,753 1300,766 1325,778 1350,788 1368,792 1385,793 1395,794', 'c-yellow');

[874, 890, 913, 936, 951].forEach(y => hline('kdj', y, 'grid'));
curve('kdj', '134,943 145,941 157,940 167,929 177,913 187,901 197,894 210,887 225,883 240,881 252,879 262,882 275,890 283,896 294,893 305,902 316,917 326,925 337,921 348,924 368,931 390,929 399,915 410,909 420,913 432,919 446,920 457,916 466,911 477,899 485,892 494,889 506,896 520,893 540,889 548,886 560,890 568,893 590,887 605,892 633,889 665,889 675,891 685,899 700,903 720,905 728,907 738,914 750,927 760,936 775,930 787,925 792,922 802,923 812,911 823,903 835,892 845,887 858,882 875,878 887,877 897,881 908,889 918,885 928,884 940,887 960,897 970,893 981,890 1000,893 1013,891 1025,886 1040,881 1055,878 1075,878 1087,881 1098,884 1120,884 1130,882 1142,885 1152,883 1162,886 1182,891 1193,887 1205,889 1215,897 1225,902 1235,915 1247,927 1265,936 1280,941 1300,941 1308,944 1322,944 1333,939 1343,933 1353,928 1363,917 1373,905 1385,899 1394,900', 'c-white');
curve('kdj', '134,941 155,940 167,937 177,930 187,919 200,910 215,900 230,893 245,887 260,884 270,886 283,889 295,891 305,895 320,906 335,912 348,917 368,924 385,927 397,924 410,918 425,916 440,918 455,918 466,916 477,910 485,904 494,900 515,897 530,895 548,890 575,891 620,891 645,889 675,891 700,897 728,903 740,909 757,920 770,924 787,925 802,924 820,918 835,908 850,897 870,888 885,884 898,882 908,885 925,884 940,886 960,890 985,891 1003,892 1018,890 1035,886 1060,882 1085,880 1105,882 1140,883 1152,883 1165,886 1182,888 1205,888 1225,895 1240,905 1260,918 1280,930 1300,937 1320,940 1332,940 1345,937 1357,932 1375,921 1385,913 1394,909', 'c-yellow');
curve('kdj', '134,947 145,940 156,939 167,917 176,882 187,862 200,860 209,856 220,859 240,867 252,868 262,880 272,893 283,910 293,897 305,921 315,946 326,955 336,937 345,940 358,941 368,945 380,939 389,933 399,898 410,891 420,908 431,924 443,923 453,919 463,908 473,884 484,867 494,869 505,892 525,884 538,881 548,875 558,889 568,899 580,889 590,883 600,892 611,894 622,892 633,886 650,887 665,890 675,896 685,913 706,915 717,911 727,916 738,933 748,953 760,962 771,943 781,930 791,919 802,922 813,895 825,879 834,866 845,861 867,861 887,865 898,879 907,899 918,886 928,882 939,889 950,901 960,909 980,890 1003,896 1012,890 1033,874 1045,870 1055,869 1077,875 1088,881 1098,888 1110,885 1120,886 1130,881 1141,887 1152,883 1162,891 1173,893 1183,899 1194,887 1205,888 1215,907 1225,917 1236,946 1246,960 1260,963 1278,964 1288,956 1299,951 1309,955 1321,950 1333,938 1342,923 1353,915 1363,892 1374,873 1385,870 1394,882', 'c-magenta');

/* tick-by-tick trades */
const lots = [1,16,30,13,4,3,14,1,15,11,48,1,1,10,5,17,5,10,5,5,5,3,6,15,3,1,10,1,58,12,9,10,5,2,36,2];
document.getElementById('ticks').innerHTML = lots.map((lot, i) =>
  `<tr><td>${i ? 25 + i : '15:00:17'}</td><td>33.02</td><td>${lot}</td></tr>`).join('');
```
